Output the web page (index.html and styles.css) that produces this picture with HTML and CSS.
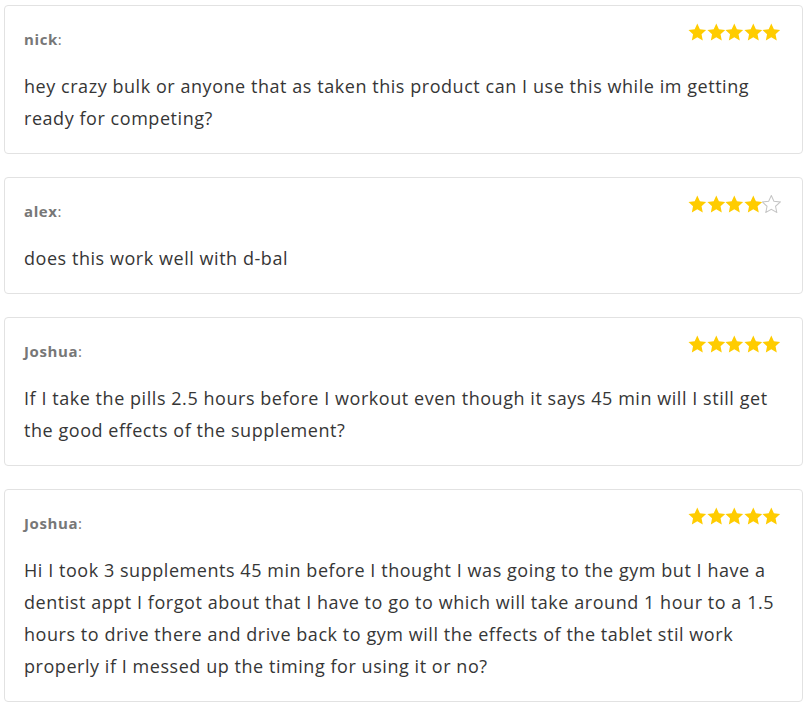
FILE: index.html
```html
<!DOCTYPE html>
<html>
  <head>
    <link rel="stylesheet" href="styles.css">
  </head>
  <body>
    <svg width="0" height="0" class="defs">
      <defs>
        <path id="star" d="M10 0L12.82 6.12 19.51 6.91 14.57 11.48 15.88 18.09 10 14.8 4.12 18.09 5.43 11.48 0.49 6.91 7.18 6.12Z"/>
      </defs>
    </svg>

    <div class="reviews">
      <div class="review">
        <div class="review-head">
          <span class="author"><b>nick</b>:</span>
          <span class="stars" data-rating="5"></span>
        </div>
        <p class="review-text">hey crazy bulk or anyone that as taken this product can I use this while im getting ready for competing?</p>
      </div>

      <div class="review">
        <div class="review-head">
          <span class="author"><b>alex</b>:</span>
          <span class="stars" data-rating="4"></span>
        </div>
        <p class="review-text">does this work well with d-bal</p>
      </div>

      <div class="review">
        <div class="review-head">
          <span class="author"><b>Joshua</b>:</span>
          <span class="stars" data-rating="5"></span>
        </div>
        <p class="review-text">If I take the pills 2.5 hours before I workout even though it says 45 min will I still get the good effects of the supplement?</p>
      </div>

      <div class="review">
        <div class="review-head">
          <span class="author"><b>Joshua</b>:</span>
          <span class="stars" data-rating="5"></span>
        </div>
        <p class="review-text">Hi I took 3 supplements 45 min before I thought I was going to the gym but I have a dentist appt I forgot about that I have to go to which will take around 1 hour to a 1.5 hours to drive there and drive back to gym will the effects of the tablet stil work properly if I messed up the timing for using it or no?</p>
      </div>
    </div>

    <script>
      // fill each rating with five svg stars
      document.querySelectorAll('.stars').forEach(function (el) {
        let rating = parseInt(el.dataset.rating);
        let html = '';
        for (let i = 1; i <= 5; i++) {
          let cls = i <= rating ? 'star full' : 'star empty';
          html += '<svg class="' + cls + '" viewBox="0 -0.3 20 18.7"><use href="#star"/></svg>';
        }
        el.innerHTML = html;
      });
    </script>
  </body>
</html>
```

FILE: styles.css
```css
* {
  box-sizing: border-box;
}

body {
  margin: 0;
  font-family: "Open Sans", sans-serif;
  color: #363636;
  background: #fff;
}

.defs {
  position: absolute;
}

.reviews {
  padding: 5px 6px 0 4px;
}

.review {
  border: 1px solid #e2e2e2;
  border-radius: 4px;
  padding: 17px 19px 19px 19px;
  margin-bottom: 23px;
}

.review-head {
  display: flex;
  justify-content: space-between;
  align-items: flex-start;
}

.author {
  margin-top: 6px;
  font-size: 15px;
  line-height: 20px;
  color: #777;
}

.author b {
  font-weight: 700;
  letter-spacing: 0.6px;
}

.stars {
  display: flex;
  height: 18px;
  margin-right: 2px;
}

.star {
  width: 18.6px;
  height: 18px;
}

.star.full {
  fill: #ffcc00;
}

.star.empty {
  fill: none;
  stroke: #c4c4c4;
  stroke-width: 1.1;
}

.review-text {
  margin: 21px 0 0;
  font-size: 18px;
  line-height: 32px;
  letter-spacing: 0.55px;
}
```
